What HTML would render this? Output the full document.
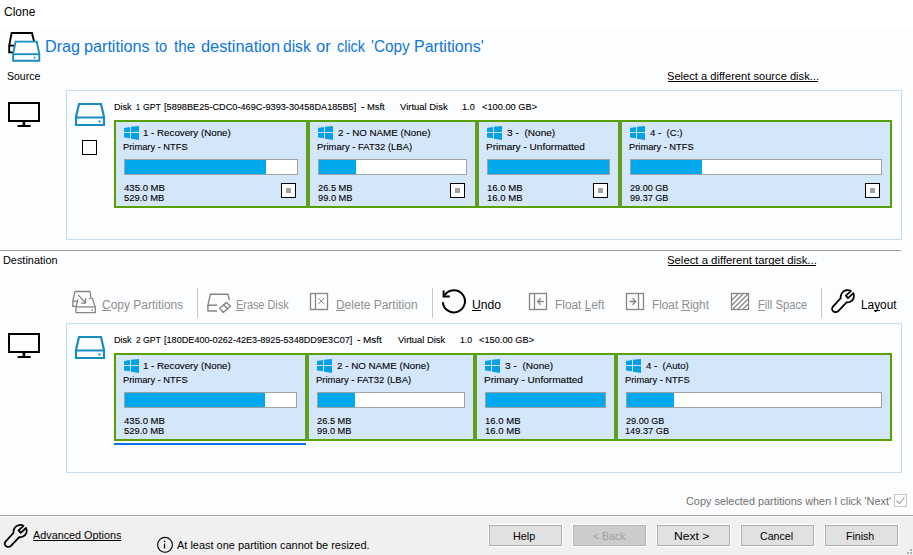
<!DOCTYPE html><html><head><meta charset="utf-8"><style>
html,body{margin:0;padding:0;width:913px;height:555px;overflow:hidden;background:#fcfdfe}
.t{position:absolute;white-space:pre;font-family:"Liberation Sans", sans-serif;transform-origin:0 0}
svg{position:absolute;left:0;top:0}
</style></head><body>
<svg width="913" height="555" viewBox="0 0 913 555">
<rect x="0" y="0" width="913" height="27" fill="#ffffff"/>
<rect x="0" y="27" width="913" height="488" fill="#fcfdfe"/>
<rect x="0" y="515" width="913" height="1" fill="#a0a0a0"/>
<rect x="0" y="516" width="913" height="1" fill="#ffffff"/>
<rect x="0" y="517" width="913" height="38" fill="#f0f0f0"/>
<rect x="0" y="249" width="901" height="3" fill="#ffffff"/>
<rect x="0" y="250" width="901" height="1" fill="#a0a0a0"/>
<path d="M14 52.4 H9.2 V45.6 L11.6 33 H31.9 L34 41" fill="none" stroke="#000" stroke-width="1.9" stroke-linejoin="miter"/>
<path d="M9.2 45.6 H14" fill="none" stroke="#000" stroke-width="1.9"/>
<path d="M15.7 41.6 H36.7 L39.3 53.5 V60.8 H13.1 V53.5 Z" fill="#fff" stroke="#1a8dc0" stroke-width="1.9"/>
<path d="M13.1 54.2 H39.3" stroke="#1a8dc0" stroke-width="1.9"/>
<rect x="33.7" y="56.7" width="1.7" height="1.7" fill="#1a8dc0"/>
<rect x="66" y="90" width="836" height="150" fill="#c4def4"/>
<rect x="67" y="91" width="834" height="148" fill="#fcfdfe"/>
<rect x="9" y="103" width="30" height="18" fill="none" stroke="#000" stroke-width="2"/>
<rect x="22.6" y="122" width="2.6" height="3" fill="#000"/>
<rect x="17.6" y="125" width="13" height="2" fill="#000"/>
<path d="M79 104 H101 L104 117 V125 H76 V117 Z" fill="none" stroke="#1a8dc0" stroke-width="2.2" stroke-linejoin="miter"/>
<path d="M76 117.5 H104" stroke="#1a8dc0" stroke-width="2"/>
<rect x="98.5" y="120.5" width="2" height="2" fill="#1a8dc0"/>
<rect x="82" y="140" width="15" height="15" fill="#000000"/>
<rect x="83" y="141" width="13" height="13" fill="#fcfdfe"/>
<rect x="114" y="120" width="194" height="88" fill="#58a000"/>
<rect x="306" y="122" width="2" height="84" fill="#60a01e"/>
<rect x="116" y="122" width="190" height="84" fill="#d3e6fa"/>
<path d="M124 128 L130 127 V132 H124 Z M131 126.8 L139 126 V132 H131 Z M124 133 H130 V138.3 L124 137.6 Z M131 133 H139 V140 L131 138.8 Z" fill="#06a0e6"/>
<rect x="124" y="159" width="174" height="16" fill="#a2a2a2"/>
<rect x="125" y="160" width="172" height="14" fill="#ffffff"/>
<rect x="125" y="160" width="141" height="14" fill="#00a8ec"/>
<rect x="281" y="183" width="15" height="15" fill="#000"/>
<rect x="282" y="184" width="13" height="13" fill="#fff"/>
<rect x="286" y="188" width="5" height="5" fill="#a0a0a0"/>
<rect x="308" y="120" width="169" height="88" fill="#58a000"/>
<rect x="308" y="122" width="2" height="84" fill="#60a01e"/>
<rect x="475" y="122" width="2" height="84" fill="#60a01e"/>
<rect x="310" y="122" width="165" height="84" fill="#d3e6fa"/>
<path d="M318 128 L324 127 V132 H318 Z M325 126.8 L333 126 V132 H325 Z M318 133 H324 V138.3 L318 137.6 Z M325 133 H333 V140 L325 138.8 Z" fill="#06a0e6"/>
<rect x="318" y="159" width="149" height="16" fill="#a2a2a2"/>
<rect x="319" y="160" width="147" height="14" fill="#ffffff"/>
<rect x="319" y="160" width="37" height="14" fill="#00a8ec"/>
<rect x="450" y="183" width="15" height="15" fill="#000"/>
<rect x="451" y="184" width="13" height="13" fill="#fff"/>
<rect x="455" y="188" width="5" height="5" fill="#a0a0a0"/>
<rect x="477" y="120" width="143" height="88" fill="#58a000"/>
<rect x="477" y="122" width="2" height="84" fill="#60a01e"/>
<rect x="618" y="122" width="2" height="84" fill="#60a01e"/>
<rect x="479" y="122" width="139" height="84" fill="#d3e6fa"/>
<path d="M487 128 L493 127 V132 H487 Z M494 126.8 L502 126 V132 H494 Z M487 133 H493 V138.3 L487 137.6 Z M494 133 H502 V140 L494 138.8 Z" fill="#06a0e6"/>
<rect x="487" y="159" width="123" height="16" fill="#a2a2a2"/>
<rect x="488" y="160" width="121" height="14" fill="#ffffff"/>
<rect x="488" y="160" width="121" height="14" fill="#00a8ec"/>
<rect x="593" y="183" width="15" height="15" fill="#000"/>
<rect x="594" y="184" width="13" height="13" fill="#fff"/>
<rect x="598" y="188" width="5" height="5" fill="#a0a0a0"/>
<rect x="620" y="120" width="272" height="88" fill="#58a000"/>
<rect x="620" y="122" width="2" height="84" fill="#60a01e"/>
<rect x="622" y="122" width="268" height="84" fill="#d3e6fa"/>
<path d="M630 128 L636 127 V132 H630 Z M637 126.8 L645 126 V132 H637 Z M630 133 H636 V138.3 L630 137.6 Z M637 133 H645 V140 L637 138.8 Z" fill="#06a0e6"/>
<rect x="630" y="159" width="252" height="16" fill="#a2a2a2"/>
<rect x="631" y="160" width="250" height="14" fill="#ffffff"/>
<rect x="631" y="160" width="71" height="14" fill="#00a8ec"/>
<rect x="865" y="183" width="15" height="15" fill="#000"/>
<rect x="866" y="184" width="13" height="13" fill="#fff"/>
<rect x="870" y="188" width="5" height="5" fill="#a0a0a0"/>
<rect x="197" y="288" width="1" height="30" fill="#c8c8c8"/>
<rect x="432" y="288" width="1" height="30" fill="#c8c8c8"/>
<rect x="821" y="288" width="1" height="30" fill="#c8c8c8"/>
<g fill="none" stroke="#868686" stroke-width="1.3" stroke-linejoin="round"><path d="M76 306.4 H72.8 V301.2 L75 291.5 H89.9 L90.9 297.6"/><path d="M72.8 301.2 H77.6"/><path d="M89.2 298.3 H92.2 L95.3 306.9 V312.6 H76 V306.9 L77.8 299.4"/><path d="M76 306.9 H95.3"/><path d="M78.3 295.1 L85.4 302.8 M85.6 298.3 V303.1 H81.1"/></g><rect x="91.5" y="309.5" width="1.5" height="1.5" fill="#868686"/>
<g fill="none" stroke="#868686" stroke-width="1.4" stroke-linejoin="round"><path d="M217 305.3 H207.9 L210.4 294.2 H228 L229.4 300.2"/><path d="M207.9 305 V311 H217"/><path d="M226.5 302.4 L230.5 306.2 L223.3 312.5 L219.6 308.2 Z M223.7 304.7 L227.6 308.7"/></g>
<g fill="none" stroke="#868686" stroke-width="1.3"><rect x="310.5" y="293.5" width="17" height="16"/><path d="M315.5 293.5 V309.5"/><path d="M318.2 298.2 L324.2 304.2 M324.2 298.2 L318.2 304.2" stroke-width="1"/></g>
<g fill="none" stroke="#000" stroke-width="2"><path d="M442.8 302.1 A11.1 11.1 0 1 0 444.6 295.2"/><path d="M443.6 290.5 V296.4 H449.8"/></g>
<g fill="none" stroke="#868686" stroke-width="1.3"><rect x="529.5" y="293.5" width="17" height="16"/><path d="M534.5 293.5 V309.5"/><path d="M543.8 301.5 H537.6 M540.7 298.3 L537.6 301.5 L540.7 304.7"/></g>
<g fill="none" stroke="#868686" stroke-width="1.3"><rect x="626.5" y="293.5" width="17" height="16"/><path d="M638.5 293.5 V309.5"/><path d="M629.4 301.5 H635.6 M632.5 298.3 L635.7 301.5 L632.5 304.7"/></g>
<g fill="none" stroke="#868686" stroke-width="1.3"><rect x="731.5" y="293.5" width="17" height="16"/><path d="M732 300 L738 294 M732 305 L743 294 M733 309 L748 294 M738 309 L748 299 M743 309 L748 304"/></g>
<g transform="translate(826,284) scale(0.06127)"><path d="M240 232 C232 185 262 112 330 102 C360 98 390 105 405 116 L324 190 L360 230 L446 150 C472 195 455 262 395 290 C375 300 350 302 335 300 L200 442 C170 470 120 462 103 425 C95 405 98 385 110 372 Z" fill="none" stroke="#000" stroke-width="29" stroke-linejoin="round"/></g>
<rect x="66" y="323" width="836" height="150" fill="#c4def4"/>
<rect x="67" y="324" width="834" height="148" fill="#fcfdfe"/>
<rect x="9" y="334" width="30" height="18" fill="none" stroke="#000" stroke-width="2"/>
<rect x="22.6" y="353" width="2.6" height="3" fill="#000"/>
<rect x="17.6" y="356" width="13" height="2" fill="#000"/>
<path d="M79 337 H101 L104 350 V358 H76 V350 Z" fill="none" stroke="#1a8dc0" stroke-width="2.2" stroke-linejoin="miter"/>
<path d="M76 350.5 H104" stroke="#1a8dc0" stroke-width="2"/>
<rect x="98.5" y="353.5" width="2" height="2" fill="#1a8dc0"/>
<rect x="114" y="353" width="193" height="88" fill="#58a000"/>
<rect x="305" y="355" width="2" height="84" fill="#60a01e"/>
<rect x="116" y="355" width="189" height="84" fill="#d3e6fa"/>
<path d="M124 361 L130 360 V365 H124 Z M131 359.8 L139 359 V365 H131 Z M124 366 H130 V371.3 L124 370.6 Z M131 366 H139 V373 L131 371.8 Z" fill="#06a0e6"/>
<rect x="124" y="392" width="173" height="16" fill="#a2a2a2"/>
<rect x="125" y="393" width="171" height="14" fill="#ffffff"/>
<rect x="125" y="393" width="140" height="14" fill="#00a8ec"/>
<rect x="307" y="353" width="168" height="88" fill="#58a000"/>
<rect x="307" y="355" width="2" height="84" fill="#60a01e"/>
<rect x="473" y="355" width="2" height="84" fill="#60a01e"/>
<rect x="309" y="355" width="164" height="84" fill="#d3e6fa"/>
<path d="M317 361 L323 360 V365 H317 Z M324 359.8 L332 359 V365 H324 Z M317 366 H323 V371.3 L317 370.6 Z M324 366 H332 V373 L324 371.8 Z" fill="#06a0e6"/>
<rect x="317" y="392" width="148" height="16" fill="#a2a2a2"/>
<rect x="318" y="393" width="146" height="14" fill="#ffffff"/>
<rect x="318" y="393" width="37" height="14" fill="#00a8ec"/>
<rect x="475" y="353" width="141" height="88" fill="#58a000"/>
<rect x="475" y="355" width="2" height="84" fill="#60a01e"/>
<rect x="614" y="355" width="2" height="84" fill="#60a01e"/>
<rect x="477" y="355" width="137" height="84" fill="#d3e6fa"/>
<path d="M485 361 L491 360 V365 H485 Z M492 359.8 L500 359 V365 H492 Z M485 366 H491 V371.3 L485 370.6 Z M492 366 H500 V373 L492 371.8 Z" fill="#06a0e6"/>
<rect x="485" y="392" width="121" height="16" fill="#a2a2a2"/>
<rect x="486" y="393" width="119" height="14" fill="#ffffff"/>
<rect x="486" y="393" width="119" height="14" fill="#00a8ec"/>
<rect x="616" y="353" width="276" height="88" fill="#58a000"/>
<rect x="616" y="355" width="2" height="84" fill="#60a01e"/>
<rect x="618" y="355" width="272" height="84" fill="#d3e6fa"/>
<path d="M626 361 L632 360 V365 H626 Z M633 359.8 L641 359 V365 H633 Z M626 366 H632 V371.3 L626 370.6 Z M633 366 H641 V373 L633 371.8 Z" fill="#06a0e6"/>
<rect x="626" y="392" width="256" height="16" fill="#a2a2a2"/>
<rect x="627" y="393" width="254" height="14" fill="#ffffff"/>
<rect x="627" y="393" width="47" height="14" fill="#00a8ec"/>
<rect x="114" y="443" width="192" height="2" fill="#0a74e0"/>
<rect x="894" y="494" width="13" height="13" fill="#c6c6c6"/>
<rect x="895" y="495" width="11" height="11" fill="#fcfdfe"/>
<path d="M896.5 500.5 L899.5 503.5 L904.5 497" fill="none" stroke="#a8a8a8" stroke-width="1.2"/>
<g transform="translate(-1.3,518.8) scale(0.06127)"><path d="M240 232 C232 185 262 112 330 102 C360 98 390 105 405 116 L324 190 L360 230 L446 150 C472 195 455 262 395 290 C375 300 350 302 335 300 L200 442 C170 470 120 462 103 425 C95 405 98 385 110 372 Z" fill="none" stroke="#000" stroke-width="29" stroke-linejoin="round"/></g>
<circle cx="165" cy="544.8" r="7.4" fill="none" stroke="#000" stroke-width="1.1"/><rect x="163.9" y="540.7" width="1.3" height="1.3" fill="#000"/><rect x="163.9" y="543.6" width="1.2" height="4.8" fill="#000"/>
<rect x="488" y="524" width="75" height="23" fill="#ffffff"/>
<rect x="489" y="525" width="73" height="21" fill="#adadad"/>
<rect x="490" y="526" width="71" height="19" fill="#e1e1e1"/>
<rect x="572" y="524" width="75" height="23" fill="#ffffff"/>
<rect x="573" y="525" width="73" height="21" fill="#b4b4b4"/>
<rect x="574" y="526" width="71" height="19" fill="#cccccc"/>
<rect x="656" y="524" width="75" height="23" fill="#ffffff"/>
<rect x="657" y="525" width="73" height="21" fill="#adadad"/>
<rect x="658" y="526" width="71" height="19" fill="#e1e1e1"/>
<rect x="740" y="524" width="75" height="23" fill="#ffffff"/>
<rect x="741" y="525" width="73" height="21" fill="#adadad"/>
<rect x="742" y="526" width="71" height="19" fill="#e1e1e1"/>
<rect x="824" y="524" width="75" height="23" fill="#ffffff"/>
<rect x="825" y="525" width="73" height="21" fill="#adadad"/>
<rect x="826" y="526" width="71" height="19" fill="#e1e1e1"/>
<rect x="910" y="549" width="2" height="2" fill="#b0b0b0"/>
<rect x="907" y="552" width="2" height="2" fill="#b0b0b0"/>
<rect x="910" y="552" width="2" height="2" fill="#b0b0b0"/>
</svg>
<div class="t" style="left:3.68px;top:5px;font-size:12px;line-height:14px;color:#000;transform:scaleX(0.9980);-webkit-text-stroke:0px #000;">Clone</div>
<div class="t" style="left:44.59px;top:38px;font-size:16px;line-height:17px;color:#0f76da;transform:scaleX(1.0110);-webkit-text-stroke:0px #0f76da;">Drag</div>
<div class="t" style="left:83.70px;top:38px;font-size:16px;line-height:17px;color:#0f76da;transform:scaleX(1.0109);-webkit-text-stroke:0px #0f76da;">partitions</div>
<div class="t" style="left:154.80px;top:38px;font-size:16px;line-height:17px;color:#0f76da;transform:scaleX(0.9068);-webkit-text-stroke:0px #0f76da;">to</div>
<div class="t" style="left:174.09px;top:38px;font-size:16px;line-height:17px;color:#0f76da;transform:scaleX(0.9497);-webkit-text-stroke:0px #0f76da;">the</div>
<div class="t" style="left:201.28px;top:38px;font-size:16px;line-height:17px;color:#0f76da;transform:scaleX(1.0207);-webkit-text-stroke:0px #0f76da;">destination</div>
<div class="t" style="left:282.58px;top:38px;font-size:16px;line-height:17px;color:#0f76da;transform:scaleX(0.9729);-webkit-text-stroke:0px #0f76da;">disk</div>
<div class="t" style="left:315.76px;top:38px;font-size:16px;line-height:17px;color:#0f76da;transform:scaleX(1.0328);-webkit-text-stroke:0px #0f76da;">or</div>
<div class="t" style="left:337.10px;top:38px;font-size:16px;line-height:17px;color:#0f76da;transform:scaleX(0.9001);-webkit-text-stroke:0px #0f76da;">click</div>
<div class="t" style="left:370.87px;top:38px;font-size:16px;line-height:17px;color:#0f76da;transform:scaleX(0.9579);-webkit-text-stroke:0px #0f76da;">'Copy</div>
<div class="t" style="left:414.44px;top:38px;font-size:16px;line-height:17px;color:#0f76da;transform:scaleX(0.9994);-webkit-text-stroke:0px #0f76da;">Partitions'</div>
<div class="t" style="left:7.29px;top:70px;font-size:11.5px;line-height:12px;color:#000;transform:scaleX(0.9143);-webkit-text-stroke:0px #000;">Source</div>
<div class="t" style="left:667.20px;top:70px;font-size:11.5px;line-height:12px;color:#000;transform:scaleX(0.9678);-webkit-text-stroke:0px #000;">Select a different source disk...</div>
<div style="position:absolute;left:667.80px;top:81px;width:150.5px;height:1px;background:#000"></div>
<div class="t" style="left:3.11px;top:254px;font-size:11.5px;line-height:12px;color:#000;transform:scaleX(0.9473);-webkit-text-stroke:0px #000;">Destination</div>
<div class="t" style="left:666.93px;top:254px;font-size:11.5px;line-height:12px;color:#000;transform:scaleX(0.9860);-webkit-text-stroke:0px #000;">Select a different target disk...</div>
<div style="position:absolute;left:667.80px;top:265px;width:148.2px;height:1px;background:#000"></div>
<div class="t" style="left:113.52px;top:101px;font-size:9.5px;line-height:11px;color:#000;transform:scaleX(0.9565);-webkit-text-stroke:0.1px #000;">Disk</div>
<div class="t" style="left:135.94px;top:101px;font-size:9.5px;line-height:11px;color:#000;transform:scaleX(0.7626);-webkit-text-stroke:0.1px #000;">1</div>
<div class="t" style="left:142.84px;top:101px;font-size:9.5px;line-height:11px;color:#000;transform:scaleX(0.9175);-webkit-text-stroke:0.1px #000;">GPT</div>
<div class="t" style="left:164.15px;top:101px;font-size:9.5px;line-height:11px;color:#000;transform:scaleX(0.9654);-webkit-text-stroke:0.1px #000;">[5898BE25-CDC0-469C-9393-30458DA185B5]</div>
<div class="t" style="left:360.71px;top:101px;font-size:9.5px;line-height:11px;color:#000;transform:scaleX(1.1464);-webkit-text-stroke:0.1px #000;">-</div>
<div class="t" style="left:367.30px;top:101px;font-size:9.5px;line-height:11px;color:#000;transform:scaleX(0.9865);-webkit-text-stroke:0.1px #000;">Msft</div>
<div class="t" style="left:399.80px;top:101px;font-size:9.5px;line-height:11px;color:#000;transform:scaleX(0.9947);-webkit-text-stroke:0.1px #000;">Virtual Disk</div>
<div class="t" style="left:461.91px;top:101px;font-size:9.5px;line-height:11px;color:#000;transform:scaleX(0.9633);-webkit-text-stroke:0.1px #000;">1.0</div>
<div class="t" style="left:482.00px;top:101px;font-size:9.5px;line-height:11px;color:#000;transform:scaleX(0.9749);-webkit-text-stroke:0.1px #000;">&lt;100.00 GB&gt;</div>
<div class="t" style="left:143.21px;top:127px;font-size:9.5px;line-height:11px;color:#000;transform:scaleX(1.0255);-webkit-text-stroke:0.1px #000;">1 - Recovery (None)</div>
<div class="t" style="left:123.37px;top:141px;font-size:9.5px;line-height:11px;color:#000;transform:scaleX(0.9803);-webkit-text-stroke:0.1px #000;">Primary - NTFS</div>
<div class="t" style="left:124.02px;top:182px;font-size:9.5px;line-height:11px;color:#000;transform:scaleX(1.0075);-webkit-text-stroke:0.1px #000;">435.0 MB</div>
<div class="t" style="left:124.00px;top:192px;font-size:9.5px;line-height:11px;color:#000;transform:scaleX(0.9911);-webkit-text-stroke:0.1px #000;">529.0 MB</div>
<div class="t" style="left:338.00px;top:127px;font-size:9.5px;line-height:11px;color:#000;transform:scaleX(1.0296);-webkit-text-stroke:0.1px #000;">2 - NO NAME (None)</div>
<div class="t" style="left:317.03px;top:141px;font-size:9.5px;line-height:11px;color:#000;transform:scaleX(0.9975);-webkit-text-stroke:0.1px #000;">Primary - FAT32 (LBA)</div>
<div class="t" style="left:318.00px;top:182px;font-size:9.5px;line-height:11px;color:#000;transform:scaleX(0.9752);-webkit-text-stroke:0.1px #000;">26.5 MB</div>
<div class="t" style="left:318.00px;top:192px;font-size:9.5px;line-height:11px;color:#000;transform:scaleX(0.9752);-webkit-text-stroke:0.1px #000;">99.0 MB</div>
<div class="t" style="left:506.57px;top:127px;font-size:9.5px;line-height:11px;color:#000;transform:scaleX(1.0618);-webkit-text-stroke:0.1px #000;">3 -  (None)</div>
<div class="t" style="left:486.30px;top:141px;font-size:9.5px;line-height:11px;color:#000;transform:scaleX(1.0588);-webkit-text-stroke:0.1px #000;">Primary - Unformatted</div>
<div class="t" style="left:486.96px;top:182px;font-size:9.5px;line-height:11px;color:#000;transform:scaleX(1.0044);-webkit-text-stroke:0.1px #000;">16.0 MB</div>
<div class="t" style="left:486.96px;top:192px;font-size:9.5px;line-height:11px;color:#000;transform:scaleX(1.0044);-webkit-text-stroke:0.1px #000;">16.0 MB</div>
<div class="t" style="left:650.02px;top:127px;font-size:9.5px;line-height:11px;color:#000;transform:scaleX(1.0109);-webkit-text-stroke:0.1px #000;">4 -  (C:)</div>
<div class="t" style="left:629.37px;top:141px;font-size:9.5px;line-height:11px;color:#000;transform:scaleX(0.9803);-webkit-text-stroke:0.1px #000;">Primary - NTFS</div>
<div class="t" style="left:629.59px;top:182px;font-size:9.5px;line-height:11px;color:#000;transform:scaleX(0.9571);-webkit-text-stroke:0.1px #000;">29.00 GB</div>
<div class="t" style="left:630.03px;top:192px;font-size:9.5px;line-height:11px;color:#000;transform:scaleX(0.9576);-webkit-text-stroke:0.1px #000;">99.37 GB</div>
<div class="t" style="left:102.35px;top:298px;font-size:12.5px;line-height:14px;color:#8f8f8f;transform:scaleX(0.9585);-webkit-text-stroke:0px #8f8f8f;">Copy Partitions</div>
<div style="position:absolute;left:102.35px;top:310px;width:8.7px;height:1px;background:#8f8f8f"></div>
<div class="t" style="left:236.21px;top:298px;font-size:12.5px;line-height:14px;color:#8f8f8f;transform:scaleX(0.8705);-webkit-text-stroke:0px #8f8f8f;">Erase Disk</div>
<div style="position:absolute;left:236.21px;top:310px;width:7.3px;height:1px;background:#8f8f8f"></div>
<div class="t" style="left:336.10px;top:298px;font-size:12.5px;line-height:14px;color:#8f8f8f;transform:scaleX(0.9540);-webkit-text-stroke:0px #8f8f8f;">Delete Partition</div>
<div style="position:absolute;left:336.10px;top:310px;width:8.6px;height:1px;background:#8f8f8f"></div>
<div class="t" style="left:472.16px;top:298px;font-size:12.5px;line-height:14px;color:#000;transform:scaleX(0.9713);-webkit-text-stroke:0px #000;">Undo</div>
<div style="position:absolute;left:472.16px;top:310px;width:8.8px;height:1px;background:#000"></div>
<div class="t" style="left:554.90px;top:298px;font-size:12.5px;line-height:14px;color:#8f8f8f;transform:scaleX(0.9484);-webkit-text-stroke:0px #8f8f8f;">Float Left</div>
<div style="position:absolute;left:584.55px;top:310px;width:6.6px;height:1px;background:#8f8f8f"></div>
<div class="t" style="left:651.90px;top:298px;font-size:12.5px;line-height:14px;color:#8f8f8f;transform:scaleX(0.9415);-webkit-text-stroke:0px #8f8f8f;">Float Right</div>
<div style="position:absolute;left:681.34px;top:310px;width:8.5px;height:1px;background:#8f8f8f"></div>
<div class="t" style="left:757.78px;top:298px;font-size:12.5px;line-height:14px;color:#8f8f8f;transform:scaleX(0.8982);-webkit-text-stroke:0px #8f8f8f;">Fill Space</div>
<div style="position:absolute;left:757.78px;top:310px;width:6.9px;height:1px;background:#8f8f8f"></div>
<div class="t" style="left:861.30px;top:298px;font-size:12.5px;line-height:14px;color:#000;transform:scaleX(0.9459);-webkit-text-stroke:0px #000;">Layout</div>
<div style="position:absolute;left:874.45px;top:310px;width:5.9px;height:1px;background:#000"></div>
<div class="t" style="left:113.52px;top:334px;font-size:9.5px;line-height:11px;color:#000;transform:scaleX(0.9565);-webkit-text-stroke:0.1px #000;">Disk</div>
<div class="t" style="left:135.61px;top:334px;font-size:9.5px;line-height:11px;color:#000;transform:scaleX(0.8849);-webkit-text-stroke:0.1px #000;">2</div>
<div class="t" style="left:142.84px;top:334px;font-size:9.5px;line-height:11px;color:#000;transform:scaleX(0.9175);-webkit-text-stroke:0.1px #000;">GPT</div>
<div class="t" style="left:164.05px;top:334px;font-size:9.5px;line-height:11px;color:#000;transform:scaleX(0.9589);-webkit-text-stroke:0.1px #000;">[180DE400-0262-42E3-8925-5348DD9E3C07]</div>
<div class="t" style="left:356.82px;top:334px;font-size:9.5px;line-height:11px;color:#000;transform:scaleX(1.1122);-webkit-text-stroke:0.1px #000;">-</div>
<div class="t" style="left:363.04px;top:334px;font-size:9.5px;line-height:11px;color:#000;transform:scaleX(1.0455);-webkit-text-stroke:0.1px #000;">Msft</div>
<div class="t" style="left:397.80px;top:334px;font-size:9.5px;line-height:11px;color:#000;transform:scaleX(0.9840);-webkit-text-stroke:0.1px #000;">Virtual Disk</div>
<div class="t" style="left:460.36px;top:334px;font-size:9.5px;line-height:11px;color:#000;transform:scaleX(0.9257);-webkit-text-stroke:0.1px #000;">1.0</div>
<div class="t" style="left:478.69px;top:334px;font-size:9.5px;line-height:11px;color:#000;transform:scaleX(0.9755);-webkit-text-stroke:0.1px #000;">&lt;150.00 GB&gt;</div>
<div class="t" style="left:143.21px;top:360px;font-size:9.5px;line-height:11px;color:#000;transform:scaleX(1.0255);-webkit-text-stroke:0.1px #000;">1 - Recovery (None)</div>
<div class="t" style="left:123.37px;top:374px;font-size:9.5px;line-height:11px;color:#000;transform:scaleX(0.9803);-webkit-text-stroke:0.1px #000;">Primary - NTFS</div>
<div class="t" style="left:124.02px;top:415px;font-size:9.5px;line-height:11px;color:#000;transform:scaleX(1.0075);-webkit-text-stroke:0.1px #000;">435.0 MB</div>
<div class="t" style="left:124.00px;top:425px;font-size:9.5px;line-height:11px;color:#000;transform:scaleX(0.9911);-webkit-text-stroke:0.1px #000;">529.0 MB</div>
<div class="t" style="left:337.00px;top:360px;font-size:9.5px;line-height:11px;color:#000;transform:scaleX(1.0296);-webkit-text-stroke:0.1px #000;">2 - NO NAME (None)</div>
<div class="t" style="left:316.03px;top:374px;font-size:9.5px;line-height:11px;color:#000;transform:scaleX(0.9975);-webkit-text-stroke:0.1px #000;">Primary - FAT32 (LBA)</div>
<div class="t" style="left:317.00px;top:415px;font-size:9.5px;line-height:11px;color:#000;transform:scaleX(0.9752);-webkit-text-stroke:0.1px #000;">26.5 MB</div>
<div class="t" style="left:317.00px;top:425px;font-size:9.5px;line-height:11px;color:#000;transform:scaleX(0.9752);-webkit-text-stroke:0.1px #000;">99.0 MB</div>
<div class="t" style="left:504.57px;top:360px;font-size:9.5px;line-height:11px;color:#000;transform:scaleX(1.0618);-webkit-text-stroke:0.1px #000;">3 -  (None)</div>
<div class="t" style="left:484.30px;top:374px;font-size:9.5px;line-height:11px;color:#000;transform:scaleX(1.0588);-webkit-text-stroke:0.1px #000;">Primary - Unformatted</div>
<div class="t" style="left:484.96px;top:415px;font-size:9.5px;line-height:11px;color:#000;transform:scaleX(1.0044);-webkit-text-stroke:0.1px #000;">16.0 MB</div>
<div class="t" style="left:484.96px;top:425px;font-size:9.5px;line-height:11px;color:#000;transform:scaleX(1.0044);-webkit-text-stroke:0.1px #000;">16.0 MB</div>
<div class="t" style="left:645.67px;top:360px;font-size:9.5px;line-height:11px;color:#000;transform:scaleX(1.0133);-webkit-text-stroke:0.1px #000;">4 -  (Auto)</div>
<div class="t" style="left:625.37px;top:374px;font-size:9.5px;line-height:11px;color:#000;transform:scaleX(0.9803);-webkit-text-stroke:0.1px #000;">Primary - NTFS</div>
<div class="t" style="left:625.59px;top:415px;font-size:9.5px;line-height:11px;color:#000;transform:scaleX(0.9571);-webkit-text-stroke:0.1px #000;">29.00 GB</div>
<div class="t" style="left:625.32px;top:425px;font-size:9.5px;line-height:11px;color:#000;transform:scaleX(0.9694);-webkit-text-stroke:0.1px #000;">149.37 GB</div>
<div class="t" style="left:686.30px;top:495px;font-size:11.5px;line-height:12px;color:#707070;transform:scaleX(0.9465);-webkit-text-stroke:0px #707070;">Copy selected partitions when I click 'Next'</div>
<div class="t" style="left:33.30px;top:529px;font-size:11.5px;line-height:12px;color:#000;transform:scaleX(0.9399);-webkit-text-stroke:0px #000;">Advanced Options</div>
<div style="position:absolute;left:33.00px;top:540px;width:88.0px;height:1px;background:#000"></div>
<div class="t" style="left:177.06px;top:539px;font-size:11.5px;line-height:12px;color:#000;transform:scaleX(0.9533);-webkit-text-stroke:0px #000;">At least one partition cannot be resized.</div>
<div class="t" style="left:513.48px;top:530px;font-size:11.5px;line-height:12px;color:#000;transform:scaleX(0.9375);-webkit-text-stroke:0px #000;">Help</div>
<div class="t" style="left:592.78px;top:530px;font-size:11.5px;line-height:12px;color:#a0a0a0;transform:scaleX(0.9139);-webkit-text-stroke:0px #a0a0a0;">&lt; Back</div>
<div class="t" style="left:674.10px;top:530px;font-size:11.5px;line-height:12px;color:#000;transform:scaleX(1.0534);-webkit-text-stroke:0px #000;">Next &gt;</div>
<div class="t" style="left:759.51px;top:530px;font-size:11.5px;line-height:12px;color:#000;transform:scaleX(0.9256);-webkit-text-stroke:0px #000;">Cancel</div>
<div class="t" style="left:846.06px;top:530px;font-size:11.5px;line-height:12px;color:#000;transform:scaleX(0.9205);-webkit-text-stroke:0px #000;">Finish</div>
</body></html>
